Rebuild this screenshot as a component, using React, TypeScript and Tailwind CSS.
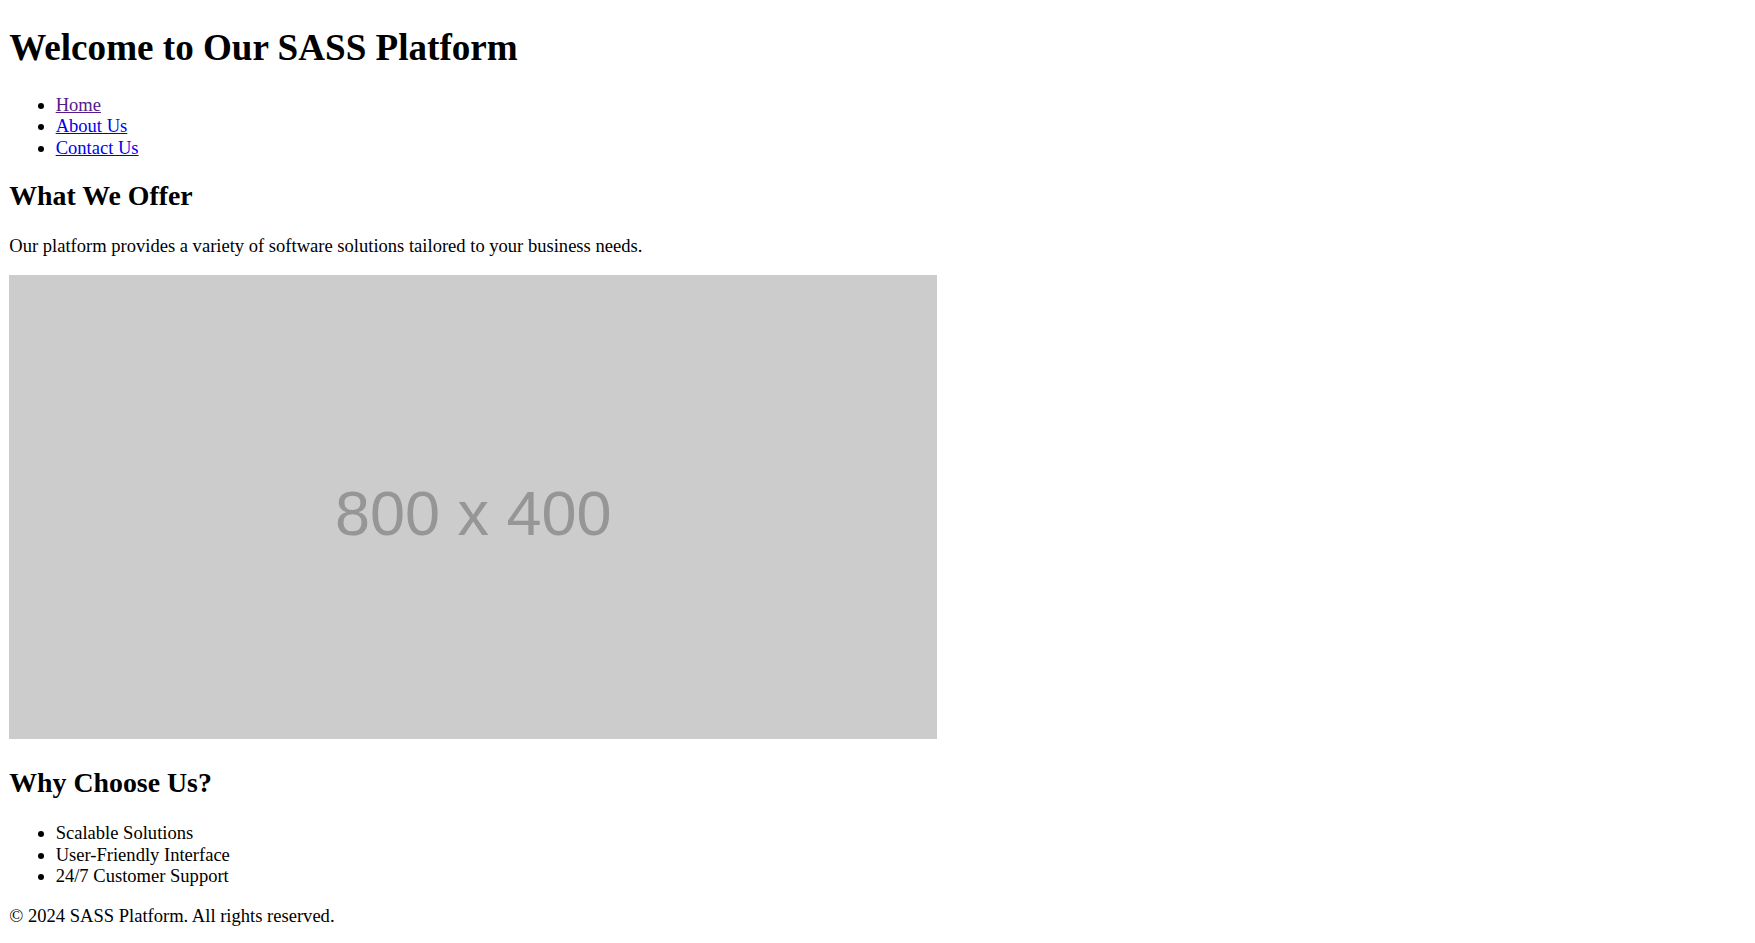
import React from 'react';

const links = [
  { label: 'Home', visited: true },
  { label: 'About Us', visited: false },
  { label: 'Contact Us', visited: false },
];

const reasons = ['Scalable Solutions', 'User-Friendly Interface', '24/7 Customer Support'];

export default function App() {
  return (
    <div className="min-h-screen bg-white text-black font-['Liberation_Serif','Times_New_Roman',serif] text-[18.56px] leading-[21.33px] px-[9.28px] pt-[26.5px] pb-[18.56px]">
      <h1 className="text-[37.12px] font-bold leading-[42.65px] mb-[24.87px]">Welcome to Our SASS Platform</h1>

      <nav>
        <ul className="list-disc pl-[46.4px] mb-[21.6px]">
          {links.map((link) => (
            <li key={link.label} className="leading-[21.33px]">
              <a
                href="#"
                className={`underline ${link.visited ? 'text-[#551a8b]' : 'text-[#0000ee]'}`}
              >
                {link.label}
              </a>
            </li>
          ))}
        </ul>
      </nav>

      <section>
        <h2 className="text-[27.84px] font-bold leading-[32px] mb-[23.1px]">What We Offer</h2>
        <p className="mb-[18.56px]">Our platform provides a variety of software solutions tailored to your business needs.</p>
        <div className="pb-[5.6px]">
          <div className="w-[928px] h-[464px] bg-[#cccccc] flex items-center justify-center pt-[12px]">
            <span className="font-['Liberation_Sans',Arial,sans-serif] text-[63px] leading-[72px] text-[#969696]">800 x 400</span>
          </div>
        </div>
      </section>

      <section>
        <h2 className="text-[27.84px] font-bold leading-[32px] mt-[23.1px] mb-[23.1px]">Why Choose Us?</h2>
        <ul className="list-disc pl-[46.4px] mb-[18.56px]">
          {reasons.map((item) => (
            <li key={item} className="leading-[21.33px]">{item}</li>
          ))}
        </ul>
      </section>

      <footer>
        <p>&copy; 2024 SASS Platform. All rights reserved.</p>
      </footer>
    </div>
  );
}
